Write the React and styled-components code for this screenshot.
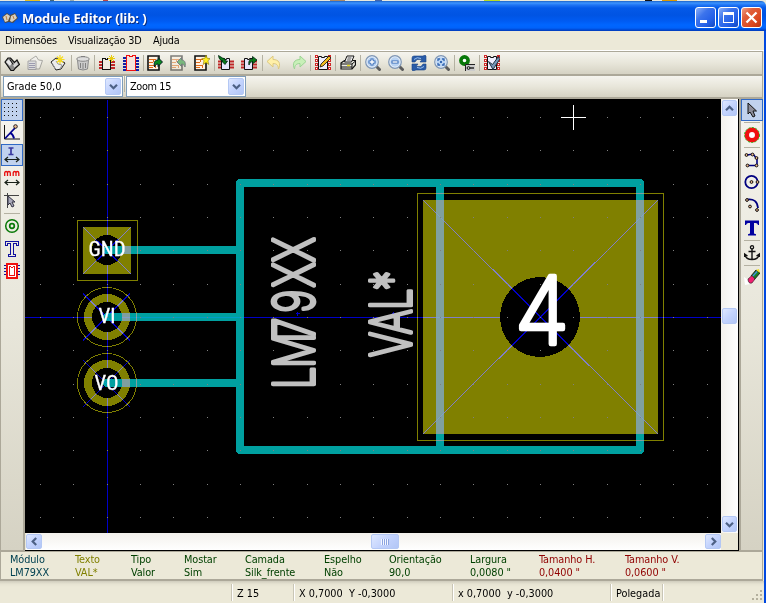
import React from "react";
import styled, { createGlobalStyle, css } from "styled-components";

const Global = createGlobalStyle`
  html, body { margin: 0; padding: 0; overflow: hidden; background: #ece9d8; }
  * { box-sizing: border-box; }
`;

const Window = styled.div`
  width: 766px;
  height: 603px;
  display: flex;
  flex-direction: column;
  font: 10.8px/13px "DejaVu Sans Condensed", "DejaVu Sans", sans-serif;
  font-stretch: condensed;
  color: #000;
  background: #ece9d8;
  overflow: hidden;
`;
const Backdrop = styled.div`
  height: 1px;
  background: linear-gradient(90deg, #e8e8dc 0 25px, #e8c020 25px 40px, #fff 40px 50px, #467 50px 54px, #e8e8dc 54px 70px, #9aa 70px 74px, #e8e8dc 74px 103px, #b44 103px 108px, #e8e8dc 108px 330px, #a86 330px 345px, #e8e8dc 345px 375px, #46a 375px 382px, #e8e8dc 382px 484px, #bd2 484px 500px, #e8e8dc 500px 645px, #111 645px 652px, #e8e8dc 652px 662px, #d90 662px 677px, #e8e8dc 677px);
`;
const TitleBar = styled.header`
  height: 30px;
  display: flex;
  align-items: center;
  padding: 3px 4px 0 2px;
  border-top-right-radius: 5px;
  background: linear-gradient(#1c62c8 0, #3c94ff 2px, #1f74f4 4px, #0459e8 7px, #0054e3 14px, #005bf2 20px, #0066ff 24px, #0062fa 27px, #0046d0 29px, #003ab8 30px);
`;
const Title = styled.h1`
  flex: 1;
  margin: 0 0 0 4px;
  font: 700 13px/18px "Open Sans", sans-serif;
  letter-spacing: -0.1px;
  color: #fff;
  text-shadow: 1px 1px 0 #0a2c80;
  white-space: pre;
`;
const WinButton = styled.button`
  width: 21px;
  height: 21px;
  padding: 0;
  margin-left: 2px;
  border: 1px solid #fff;
  border-radius: 3px;
  display: grid;
  place-items: center;
  background: ${(p) =>
    p.$close
      ? "linear-gradient(135deg, #f0a088 0, #e0603c 30%, #dc4820 70%, #b83410)"
      : "linear-gradient(135deg, #8cb0f8 0, #3c74ec 35%, #2460e8 70%, #1448c0)"};
`;
const Frame = styled.div`
  flex: 1;
  min-height: 0;
  display: flex;
  flex-direction: column;
  border-right: 2px solid #0048e0;
`;
const MenuBar = styled.nav`
  height: 20px;
  display: flex;
  padding: 3px 0 0 5px;
  border-bottom: 1px solid #fff;
`;
const MenuItem = styled.span`
  width: ${(p) => p.$w}px;
  white-space: pre;
  letter-spacing: -0.22px;
`;
const barFill = css`background: linear-gradient(#f5f4ee, #e8e6da 50%, #d5d2c3);`;
const ToolRow = styled.div`
  height: ${(p) => p.$h}px;
  margin-right: 1px;
  display: flex;
  align-items: ${(p) => p.$align || "center"};
  border: solid #aca899;
  border-width: ${(p) => (p.$first ? "1px 1px 1px 1px" : "1px 1px 2px 1px")};
  ${barFill}
`;
const Tool = styled.span`
  flex: none;
  width: 16px;
  height: 16px;
  margin-left: ${(p) => p.$gap}px;
  opacity: ${(p) => (p.$off ? 0.5 : 1)};
  svg { display: block; }
`;
const Divider = styled.i`
  flex: none;
  width: 1px;
  height: 16px;
  margin-left: ${(p) => p.$gap}px;
  background: #b4b1a2;
`;
const Combo = styled.div`
  width: 120px;
  height: 21px;
  margin-left: ${(p) => p.$gap}px;
  padding: 1px 1px 1px 3px;
  display: flex;
  align-items: center;
  justify-content: space-between;
  border: 1px solid #7f9db9;
  background: #fff;
  white-space: pre;
  letter-spacing: ${(p) => p.$ls || 0}px;
`;
const xpFace = css`
  display: grid;
  place-items: center;
  border: 1px solid #b4c8f4;
  border-radius: 2px;
  background: linear-gradient(135deg, #dfe8ff, #c3d3fd 50%, #b2c6f6);
`;
const ComboArrow = styled.span`
  width: 16px;
  height: 17px;
  ${xpFace}
`;
const Work = styled.main`
  height: 452px;
  flex: none;
  display: flex;
`;
const SideBar = styled.aside`
  width: 25px;
  display: flex;
  flex-direction: column;
  align-items: center;
  border: solid #aca899;
  border-width: ${(p) => (p.$right ? "0 1px 1px 2px" : "0 2px 1px 1px")};
  ${(p) => p.$right && "margin-right: 1px; width: 24px;"}
  ${barFill}
`;
const SideTool = styled.span`
  flex: none;
  width: 22px;
  height: 22px;
  margin-top: ${(p) => p.$gap || 0}px;
  display: grid;
  place-items: center;
  border: 1px solid ${(p) => (p.$on ? "#316ac5" : "transparent")};
  background: ${(p) => (p.$on ? "#c1d2ee" : "transparent")};
`;
const SideRule = styled.i`
  flex: none;
  width: 16px;
  height: 1px;
  margin-top: ${(p) => p.$gap || 0}px;
  background: #b4b1a2;
`;
const Viewport = styled.section`
  width: 714px;
  display: grid;
  grid-template-columns: 696px 17px;
  grid-template-rows: 434px 17px;
  border: solid #000;
  border-width: 0 1px 1px 0;
  background: #ece9d8;
`;
const Drawing = styled.svg`
  display: block;
  background: #000;
`;
const BlendPath = styled.path`
  mix-blend-mode: lighten;
`;
const VScroll = styled.div`
  display: flex;
  flex-direction: column;
  align-items: center;
  padding-top: 1px;
  background: linear-gradient(90deg, #f3f1ec, #fff);
`;
const HScroll = styled.div`
  display: flex;
  align-items: center;
  margin-left: 1px;
  background: linear-gradient(#f3f1ec, #fff);
`;
const ScrollPart = styled.span`
  flex: none;
  width: ${(p) => p.$w || 15}px;
  height: ${(p) => p.$h || 15}px;
  margin: ${(p) => p.$m || 0};
  ${xpFace}
`;
const InfoPanel = styled.section`
  height: 30px;
  flex: none;
  display: flex;
  padding: 1px 0 0 9px;
  margin-right: 1px;
  border: solid #aca899;
  border-width: 1px 1px 2px 1px;
`;
const Info = styled.div`
  width: ${(p) => p.$w}px;
  color: ${(p) => p.$c};
  letter-spacing: -0.08px;
  white-space: pre;
`;
const StatusBar = styled.footer`
  flex: 1;
  display: flex;
  align-items: center;
  background: linear-gradient(#cfccbd 0, #e6e3d2 3px, #ece9d8 6px);
`;
const Status = styled.div`
  width: ${(p) => p.$w}px;
  height: 17px;
  padding: 3px 0 0 4px;
  border-left: ${(p) => (p.$plain ? "0" : "1px solid #fff")};
  border-right: ${(p) => (p.$last ? "0" : "1px solid #c9c6b6")};
  white-space: pre;
  ${(p) => p.$grip && "padding: 0 1px 0 0; display: flex; justify-content: flex-end; align-items: flex-end;"}
`;

/* ---------- icons ---------- */
const Svg = ({ children, w = 16, h = 16, smooth }) => (
  <svg width={w} height={h} viewBox={`0 0 ${w} ${h}`} fill="none" shapeRendering={smooth ? "auto" : "crispEdges"}>
    {children}
  </svg>
);
const Sheet = () => (
  <>
    <path d="M1 1h11v14H1z" fill="#fff2e2" stroke="#111" strokeWidth="1.600" />
    <path d="M2 4.500h7M2 7.500h4M2 10.500h7M2 12.500h4M6.500 4v3M8.500 10v3" stroke="#e06a18" />
  </>
);
const GreenArrow = ({ flip }) => (
  <path d="M7.500 12C6.500 7 8 5 11 5V2.500l4.500 4.500-4.500 4.500V9c-2 0-2.500 1-3.500 3z" fill="#0a8a20" stroke="#012" strokeWidth=".9" transform={flip ? "matrix(-1 0 0 1 22.500 0)" : undefined} />
);
const Star = () => (
  <path d="M12 0l1.200 3.300 3 .3-2.300 2.200.9 3.700-2.800-2-2.800 2 .8-3.700L7.800 3.600l3-.3z" fill="#ffee20" stroke="#8a7a00" strokeWidth=".6" />
);
const Pins = () => <path d="M0 6.500h4M0 9.500h4M0 12.500h4M12 6.500h4M12 9.500h4M12 12.500h4" stroke="#c02828" strokeWidth="2" />;
const Chip = () => (
  <>
    <Pins />
    <path d="M3.500 3.500h3v1h2v-1h3v11h-8z" fill="#e6e6fa" stroke="#111" />
  </>
);
const Film = () => (
  <>
    <path d="M1.500 0v16M14.500 0v16" stroke="#d02828" strokeWidth="3" strokeDasharray="3 1" />
    <path d="M1 1.500h1M1 5.500h1M1 9.500h1M1 13.500h1M14 5.500h1M14 9.500h1M14 13.500h1" stroke="#fff" />
    <path d="M3.500 1.500h3v1h3v-1h3v13h-9z" fill="#eef" stroke="#111" />
  </>
);
const Lens = ({ children }) => (
  <>
    <path d="M11.500 11.500l3 3" stroke="#5c5c5c" strokeWidth="3" strokeLinecap="round" />
    <circle cx="7" cy="7" r="6.300" fill="#e4eefa" stroke="#7f96b4" strokeWidth="1.200" />
    <circle cx="7" cy="7" r="4.700" fill="#b8d2f2" />
    {children}
  </>
);
const Dims = () => <path d="M1 12.500h14M4 10l-3 2.500L4 15M12 10l3 2.500-3 2.500" stroke="#182018" strokeWidth="1.200" />;

const ICONS = {
  book: <Svg smooth><path d="M1 7l3-4h2.500l4 4.500L13 5l2.500 4.500-4 3.500-2 2.500H7z" fill="#8a8a8a" stroke="#111" strokeWidth="1.200" /><path d="M2 7l2.500-2.500L8 8l-2 3z" fill="#e8e8e8" /><path d="M9 10l3.500-3.500L14 9.500l-3.500 3z" fill="#d6d6d6" /><path d="M6 4.500l3 5" stroke="#111" /></Svg>,
  paste: <Svg smooth><path d="M3 5l6-4 2.500 4 4 .5-3 8.500H9z" fill="#f4f4f4" stroke="#666" /><path d="M1 6h8v8.500H1z" fill="#d4d8e4" stroke="#667" /><path d="M2 8.500h6M2 10.500h6M2 12.500h6" stroke="#558" /></Svg>,
  open: <Svg smooth><path d="M1 7l5-4 2 1 7 4-4 6-5 1z" fill="#ededed" stroke="#222" /><path d="M2 8l3.500 6M6 6l2 3 4 1-2 4" stroke="#999" /><path d="M10 0v9M5.500 4.500h9M7 1.500l6 6M13 1.500l-6 6" stroke="#f6dc20" strokeWidth="1.200" /></Svg>,
  trash: <Svg smooth><path d="M2.500 5h11l-1 9q-4.500 2-9 0z" fill="#ccc" stroke="#888" /><ellipse cx="8" cy="4" rx="6.300" ry="2.300" fill="#ddd" stroke="#888" /><path d="M5.500 8v5M8 8v6M10.500 8v5M6 1.500h4" stroke="#808080" /></Svg>,
  chipNew: <Svg><Pins /><path d="M3.500 3.500h3v1h2v-1h3v11h-8z" fill="#eeebe0" stroke="#111" /><path d="M12.500 0v7M9 3.500h7M10 1l5 5M15 1l-5 5" stroke="#e8cc10" /></Svg>,
  chip: <Svg><path d="M0 2.500h16M0 5.500h16M0 8.500h16M0 11.500h16M0 14.500h16" stroke="#1020a8" strokeWidth="2" /><path d="M3.500.5h3v1h3v-1h3v15h-9z" fill="#f6e4dc" stroke="#f01010" /></Svg>,
  load: <Svg smooth><Sheet /><GreenArrow /></Svg>,
  update: <Svg smooth><Sheet /><GreenArrow flip /></Svg>,
  insert: <Svg smooth><Sheet /><Star /></Svg>,
  imp: <Svg smooth><Chip /><path d="M.5.500l4 2.500q3 0 3 3h2L7 9.500 3.500 6H5Q1 5.500.5.500z" fill="#0a7a18" stroke="#021" strokeWidth=".8" /></Svg>,
  exp: <Svg smooth><Chip /><path d="M8 10c-1-4 1-6 3.500-6V1.500L16 5l-4.500 4V6.500Q9 6.500 8 10z" fill="#0a7a18" stroke="#021" strokeWidth=".8" /></Svg>,
  undo: <Svg smooth><path d="M1 6.500L7 1v3.500c6 0 8 4 5.500 9.500-.3-4-2-5.500-5.500-5.500V12z" fill="#fff0a8" stroke="#dcc880" /></Svg>,
  redo: <Svg smooth><path d="M15 6.500L9 1v3.500C3 4.500 1 8.500 3.500 14c.3-4 2-5.500 5.500-5.500V12z" fill="#c8f0b8" stroke="#9cd494" /></Svg>,
  edit: <Svg smooth><Film /><path d="M5 12l1-3 8-8 2 2-8 8z" fill="#f0bc20" stroke="#111" strokeWidth=".8" /></Svg>,
  print: <Svg smooth><path d="M1 8l3.500-2.500H15.500v4.500l-3.500 4H1z" fill="#e8e8e0" stroke="#111" strokeWidth="1.200" /><path d="M4.500 7l2.500-6h7l-2.500 6z" fill="#fff" stroke="#111" /><path d="M7.500 3h4M6.800 5h4" stroke="#444" /><path d="M1 9h11l3.500-3M1 12h11M12 9v5" stroke="#111" /><path d="M7 10.500h3" stroke="#e8dc20" strokeWidth="1.500" /></Svg>,
  zin: <Svg smooth><Lens><path d="M7 3.500v7M3.500 7h7" stroke="#3468b4" strokeWidth="3" /><path d="M7 4.500v5M4.500 7h5" stroke="#fff" strokeWidth="1.400" /></Lens></Svg>,
  zout: <Svg smooth><Lens><path d="M3.500 7h7" stroke="#3468b4" strokeWidth="3" /><path d="M4.500 7h5" stroke="#fff" strokeWidth="1.400" /></Lens></Svg>,
  refresh: <Svg smooth><path d="M1 7V3q0-2 2-2h9l2-1 1 1v6H9l2-2.500H6L4 7zM15 9v4q0 2-2 2H5l-3 1-1-1V9h6l-2 2.500h5L12 9z" fill="#2a5ca8" stroke="#1c4484" strokeWidth=".6" /><path d="M3 4.500q3-3 7-1M13 11.500q-3 3-7 1" stroke="#9cc0ec" /></Svg>,
  zfit: <Svg smooth><Lens><path d="M4 6V4h2M8 4h2v2M10 8v2H8M6 10H4V8" stroke="#3468b4" strokeWidth="1.300" /><path d="M6 6h2v2H6z" fill="#3468b4" /></Lens></Svg>,
  pad: <Svg smooth><circle cx="5.500" cy="5.500" r="3.600" stroke="#087808" strokeWidth="3.600" fill="#fff" /><path d="M6.500 9.500H16V16H6.500z" fill="#ccc" /><path d="M6.500 16V9.500H16" stroke="#222" /><circle cx="9.500" cy="13" r="1.400" stroke="#111" /><path d="M11 13h4" stroke="#111" strokeWidth="1.300" /></Svg>,
  check: <Svg smooth><Film /><path d="M4.500 6.500l4 3 6-8 1 3-6.500 10z" fill="#7898b8" stroke="#234" /></Svg>,

  grid: <Svg><path d="M0 1.500h16M0 5.500h16M0 9.500h16M0 13.500h16" stroke="#111" strokeDasharray="1 3" /></Svg>,
  polar: <Svg smooth><path d="M.5 1v14H16" stroke="#111" /><path d="M1 14.500L11 4" stroke="#000090" strokeWidth="1.800" /><path d="M6 9q3 1 4 5.500" stroke="#000090" strokeWidth="2" /><circle cx="11.500" cy="2.500" r="1.800" fill="#f0b890" stroke="#222" /></Svg>,
  inch: <Svg smooth><path d="M4.500 1h5M4.500 7.500h5M7 1v6.500" stroke="#3a3aa0" strokeWidth="1.700" /><Dims /></Svg>,
  mm: <Svg smooth><path d="M.7 6V3q0-1.500 1.400-1.500T3.500 3v3M3.500 3q0-1.500 1.400-1.500T6.300 3v3M9.200 6V3q0-1.500 1.400-1.500T12 3v3M12 3q0-1.500 1.400-1.500T14.800 3v3" stroke="#e81010" strokeWidth="1.300" /><Dims /></Svg>,
  cursor: <Svg smooth><path d="M0 2.500h15M3.500 0v15" stroke="#444" /><path d="M4 3v9l2-2 2 4 2-1-2-4h3z" fill="#aab" stroke="#334" /></Svg>,
  ring: <Svg smooth><circle cx="8" cy="8" r="6.300" stroke="#087808" strokeWidth="1.500" /><circle cx="8" cy="8" r="2.300" stroke="#087808" strokeWidth="1.700" /></Svg>,
  tee: <Svg><path d="M1.500 4.500v-4h13v4h-2v-2h-3v11h2v2h-7v-2h2v-11h-3v2z" stroke="#1010a0" /></Svg>,
  chipOutline: <Svg><path d="M0 2.500h16M0 5.500h16M0 8.500h16M0 11.500h16" stroke="#1010a0" /><path d="M3 1h10v14H3z" fill="#fff" stroke="#f01010" strokeWidth="2" /><path d="M5.500 3.500h1l1 1h1l1-1h1v9h-5z" stroke="#f01010" /></Svg>,
  arrow: <Svg smooth><path d="M4 1v11l2-2 3 5 2-1-2-5h3.500z" fill="#8c8c98" stroke="#111" /></Svg>,
  padRed: <Svg smooth><circle cx="8" cy="8" r="5.200" stroke="#f01010" strokeWidth="4.500" fill="#fff" /><circle cx="8" cy="8" r="7.500" stroke="#20c020" strokeDasharray="2 1.500" /></Svg>,
  poly: <Svg smooth><path d="M3 3l6-1 4 5v6.500H4" stroke="#000080" strokeWidth="1.600" /><g fill="#f0b890" stroke="#111"><circle cx="2.500" cy="3" r="1.400" /><circle cx="8.500" cy="2.500" r="1.400" /><circle cx="12.500" cy="6" r="1.400" /><circle cx="12.500" cy="13.500" r="1.400" /><circle cx="3.500" cy="13.500" r="1.400" /></g></Svg>,
  circle: <Svg smooth><circle cx="7.500" cy="8" r="6.200" stroke="#000080" strokeWidth="1.800" /><circle cx="7.500" cy="8" r="1.400" fill="#f0b890" stroke="#111" /><circle cx="13.500" cy="8" r="1.400" fill="#f0b890" stroke="#111" /></Svg>,
  arc: <Svg smooth><path d="M3 2.500Q13 1 14 11" stroke="#000080" strokeWidth="1.800" /><g fill="#f0b890" stroke="#111"><circle cx="3" cy="3" r="1.400" /><circle cx="6" cy="9.500" r="1.400" /><circle cx="13" cy="13" r="1.400" /></g></Svg>,
  tbold: <Svg smooth><path d="M1 5V.5h14V5h-1q-.5-2-2.500-2H10v10.500l2 .7V15.500H4v-1.300l2-.7V3H4.500Q2.500 3 2 5z" fill="#0000a0" /></Svg>,
  anchor: <Svg smooth><circle cx="8" cy="2.300" r="1.600" stroke="#111" strokeWidth="1.300" /><path d="M8 4v10.500M4.500 6.500h7M1 10q1 4.500 7 4.500t7-4.500M.5 12V9l3 2M15.500 12V9l-3 2" stroke="#111" strokeWidth="1.400" /></Svg>,
  eraser: <Svg smooth><path d="M0 8l3 2 3 5-5 1z" fill="#fff" /><path d="M7 7l5-6 4 3-6 7z" fill="#188020" stroke="#222" /><path d="M12 1l3-1 1 4z" fill="#f0e020" /><path d="M4 10l4-3.500 3 3.500-3 4q-4 1-4-4z" fill="#f02070" stroke="#222" strokeWidth=".6" /><path d="M9 7l4-4.500" stroke="#4090e0" strokeWidth="1.300" /></Svg>,
};

const TOOLBAR = [
  ["book", 3], ["paste", 7, 1], ["open", 7], ["|", 5], ["trash", 3], ["|", 3], ["chipNew", 4], ["chip", 8], ["|", 4],
  ["load", 3], ["update", 7, 1], ["insert", 8], ["|", 4], ["imp", 3], ["exp", 7], ["|", 5], ["undo", 3], ["redo", 9],
  ["|", 3], ["edit", 4], ["|", 4], ["print", 4], ["|", 4], ["zin", 4], ["zout", 7], ["refresh", 7], ["zfit", 7],
  ["|", 4], ["pad", 4], ["|", 4], ["check", 4],
];
const LEFT = [["grid", 0, 1], ["polar", 0], ["inch", 1, 1], ["mm", 1], ["cursor", 1], ["|", 1], ["ring", 1], ["tee", 1], ["chipOutline", 0]];
const RIGHT = [["arrow", 0, 1], ["|", 1], ["padRed", 1], ["|", 1], ["poly", 1], ["circle", 0], ["arc", 1], ["tbold", 1], ["|", 1], ["anchor", 1], ["|", 1], ["eraser", 0]];

const INFO = [
  ["Módulo", "LM79XX", 65, "#004050"], ["Texto", "VAL*", 56, "#808000"], ["Tipo", "Valor", 53, "#004000"],
  ["Mostar", "Sim", 61, "#004000"], ["Camada", "Silk_frente", 79, "#004000"], ["Espelho", "Não", 65, "#004000"],
  ["Orientação", "90,0", 81, "#004000"], ["Largura", '0,0080 "', 69, "#004000"],
  ["Tamanho H.", '0,0400 "', 86, "#900000"], ["Tamanho V.", '0,0600 "', 90, "#900000"],
];

const Chevron = ({ turn = 0 }) => (
  <svg width="9" height="9" viewBox="-4.5 -4.5 9 9" fill="none">
    <path d="M-3.500 -1.700L0 1.800L3.500 -1.700" stroke="#4d6185" strokeWidth="2.200" transform={`rotate(${turn})`} />
  </svg>
);

const SideItems = ({ items }) =>
  items.map(([name, gap, on], i) =>
    name === "|" ? <SideRule key={i} $gap={gap} /> : <SideTool key={i} $gap={gap} $on={on}>{ICONS[name]}</SideTool>
  );

/* ---------- footprint drawing ---------- */
const Axis = ({ d }) => <BlendPath d={d} stroke="#0000c8" strokeWidth="1" />;

const GridDots = () => {
  const dots = [];
  for (let j = 0; j < 13; j++)
    for (let i = 0; i < 21; i++)
      dots.push(`M${Math.round(40 + (i * 100) / 3)} ${Math.round(117 + (j * 100) / 3)}h1v1h-1z`);
  return <path d={dots.join("")} fill="#808080" />;
};

const RoundPad = ({ cy }) => (
  <>
    <circle cx="107" cy={cy} r="29.5" stroke="#808000" />
    <circle cx="107" cy={cy} r="19" stroke="#808000" strokeWidth="8" />
  </>
);

const Footprint = () => (
  <Drawing width="696" height="434" viewBox="25 99 696 434" fill="none" shapeRendering="crispEdges">
    <rect x="77.5" y="220.5" width="60" height="60" stroke="#808000" />
    <rect x="83" y="227" width="48" height="47" fill="#808000" />
    <RoundPad cy={317} />
    <RoundPad cy={383} />
    <rect x="417.5" y="193.5" width="246" height="247" stroke="#808000" />
    <rect x="423" y="200" width="235" height="234" fill="#808000" />
    <Axis d="M107.500 100V533M25 317.500H721" />
    <circle cx="107" cy="250" r="15" fill="#000" />
    <circle cx="107" cy="317" r="15" fill="#000" />
    <circle cx="107" cy="383" r="15" fill="#000" />
    <circle cx="540" cy="317" r="40" fill="#000" />
    <BlendPath
      d="M107 250H240M107 317H240M107 383H240M240 183H640V450H240ZM440 183V450"
      stroke="#00a0a0" strokeWidth="8" strokeLinecap="round" strokeLinejoin="round"
    />
    <Axis d="M83 227L131 274M131 227L83 274M83 293.500L130 340.500M130 293.500L83 340.500M83 360L130 407M130 360L83 407M423 200L658 434M658 200L423 434" />
    <Axis d="M296 313.500h4M297.500 312v4M392 313.500h4M393.500 312v4" />
    <GridDots />
    <g fontFamily="Inter" fontWeight="200" fill="#c0c0c0" stroke="#c0c0c0" strokeWidth="4" strokeLinejoin="round">
      <text transform="translate(314 387) rotate(-90) scale(.7 1)" fontSize="56.500" x="-3 27 68 106 142 178">LM79XX</text>
      <text transform="translate(411 357) rotate(-90) scale(.68 1)" fontSize="56.500" x="0 33 69 98">VAL*</text>
    </g>
    <g fontFamily="Roboto" fontWeight="400" fontSize="20" fill="#fff" stroke="#fff" strokeWidth=".3">
      <text x="88.500" y="256" textLength="37" lengthAdjust="spacingAndGlyphs">GND</text>
      <text x="98.500" y="323" textLength="17" lengthAdjust="spacingAndGlyphs">VI</text>
      <text x="94.500" y="389.500" textLength="24" lengthAdjust="spacingAndGlyphs">VO</text>
    </g>
    <text x="515" y="344" fontFamily="Inter" fontWeight="200" fontSize="93" textLength="54" lengthAdjust="spacingAndGlyphs" fill="#fff" stroke="#fff" strokeWidth="4.500" strokeLinejoin="round">4</text>
    <path d="M561 117.500H586M573.500 105V130" stroke="#fff" />
  </Drawing>
);

export default function App() {
  return (
    <Window>
      <Global />
      <Backdrop />
      <TitleBar>
        <svg width="16" height="16" viewBox="0 0 16 16">
          <path d="M0 7l5-4 3 2 5-2 3 5-5 5-4-1-4 1z" fill="#554b40" />
          <path d="M1 7l4-3 3 2-2 5-3 1zM9 6l4-2 2 4-5 4-2-1z" fill="#d8d0c0" />
          <path d="M4 6l1 4M11 6l1 3" stroke="#c08040" />
        </svg>
        <Title>Module Editor (lib: )</Title>
        <WinButton><Svg w={19} h={19}><path d="M4 12h7v3H4z" fill="#fff" /></Svg></WinButton>
        <WinButton><Svg w={19} h={19}><path d="M4.500 5.500h10v9h-10z" stroke="#fff" /><path d="M4 4h11v3H4z" fill="#fff" /></Svg></WinButton>
        <WinButton $close><Svg w={19} h={19} smooth><path d="M4.500 4.500l10 10M14.500 4.500l-10 10" stroke="#fff" strokeWidth="2.300" /></Svg></WinButton>
      </TitleBar>
      <Frame>
        <MenuBar>
          <MenuItem $w={63}>Dimensões</MenuItem>
          <MenuItem $w={85}>Visualização 3D</MenuItem>
          <MenuItem $w={40}>Ajuda</MenuItem>
        </MenuBar>
        <ToolRow $first $h={24}>
          {TOOLBAR.map(([name, gap, off], i) =>
            name === "|" ? <Divider key={i} $gap={gap} /> : <Tool key={i} $gap={gap} $off={off}>{ICONS[name]}</Tool>
          )}
        </ToolRow>
        <ToolRow $h={24} $align="flex-start">
          <Combo $gap={2}>Grade 50,0<ComboArrow><Chevron /></ComboArrow></Combo>
          <Divider $gap={1} />
          <Combo $gap={1} $ls={-0.35}>Zoom 15<ComboArrow><Chevron /></ComboArrow></Combo>
        </ToolRow>
        <Work>
          <SideBar><SideItems items={LEFT} /></SideBar>
          <Viewport>
            <Footprint />
            <VScroll>
              <ScrollPart $h={16}><Chevron turn={180} /></ScrollPart>
              <ScrollPart $m="192px 0 192px" $h={16} />
              <ScrollPart $h={16}><Chevron /></ScrollPart>
            </VScroll>
            <HScroll>
              <ScrollPart $w={16}><Chevron turn={90} /></ScrollPart>
              <ScrollPart $w={28} $m="0 306px 0 329px">
                <Svg w={8} h={6}><path d="M.5 0v6M2.500 0v6M4.500 0v6M6.500 0v6" stroke="#f4f8ff" /><path d="M1.500 0v6M3.500 0v6M5.500 0v6M7.500 0v6" stroke="#8ca4e0" /></Svg>
              </ScrollPart>
              <ScrollPart $w={16}><Chevron turn={-90} /></ScrollPart>
            </HScroll>
          </Viewport>
          <SideBar $right><SideItems items={RIGHT} /></SideBar>
        </Work>
        <InfoPanel>
          {INFO.map(([head, value, w, c]) => (
            <Info key={head} $w={w} $c={c}><div>{head}</div><div>{value}</div></Info>
          ))}
        </InfoPanel>
        <StatusBar>
          <Status $w={232} $plain />
          <Status $w={62}>Z 15</Status>
          <Status $w={159}>X 0,7000  Y -0,3000</Status>
          <Status $w={158}>x 0,7000  y -0,3000</Status>
          <Status $w={52}>Polegada</Status>
          <Status $w={101} $last $grip>
            <Svg w={12} h={12}><path d="M9 1h2v2H9zM5 5h2v2H5zM9 5h2v2H9zM1 9h2v2H1zM5 9h2v2H5zM9 9h2v2H9z" fill="#b4b09e" /></Svg>
          </Status>
        </StatusBar>
      </Frame>
    </Window>
  );
}
